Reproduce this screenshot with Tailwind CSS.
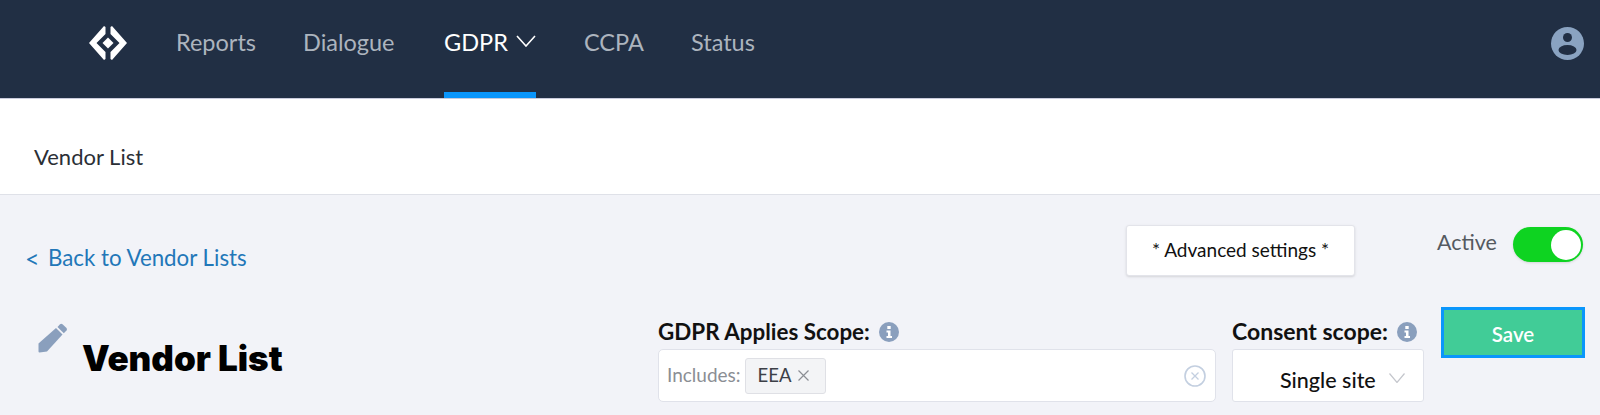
<!DOCTYPE html>
<html lang="en">
<head>
<meta charset="utf-8">
<title>Vendor List</title>
<script src="https://cdn.jsdelivr.net/npm/@tailwindcss/browser@4"></script>
</head>
<body class="w-[1600px] h-[415px] overflow-hidden bg-[#f2f3f8] font-['Lato',sans-serif]">
<nav class="h-[99px] bg-[#212f44] border-b border-[#c9cbdc] flex items-start pl-[88px] pr-[16px]">
  <svg class="w-[40px] h-[36px] mt-[25px]" viewBox="0 0 40 36" fill="#fff">
    <path d="M16 1 L17.5 2 V9 L8.5 18 L17.5 27 V34 L16 35 L1 18 Z"/>
    <path d="M24 1 L22.5 2 V9 L31.5 18 L22.5 27 V34 L24 35 L39 18 Z"/>
    <path d="M20 12.5 L25.5 18 L20 23.5 L14.500 18 Z"/>
  </svg>
  <div class="ml-[48px] flex text-[23.500px] leading-[30px] text-[#acb4be]">
    <a class="pt-[27px] w-[127px]">Reports</a>
    <a class="pt-[27px] w-[141px]">Dialogue</a>
    <a class="h-[98px] pt-[27px] w-[92px] border-b-[6px] border-[#0a96fb] text-white flex items-start gap-[8px]">GDPR
      <svg class="w-[20px] h-[12px] mt-[8px] shrink-0" viewBox="0 0 20 12" fill="none" stroke="#fff" stroke-width="1.600"><path d="M1 1 L10 11 L19 1"/></svg>
    </a>
    <a class="pt-[27px] ml-[48px] w-[107px]">CCPA</a>
    <a class="pt-[27px]">Status</a>
  </div>
  <svg class="w-[33px] h-[33px] ml-auto mt-[27px]" viewBox="0 0 33 33">
    <circle cx="16.500" cy="16.500" r="16.500" fill="#8aa3c1"/>
    <circle cx="16.500" cy="10.500" r="4.500" fill="#212f44"/>
    <ellipse cx="16.500" cy="23" rx="9" ry="5" fill="#212f44"/>
  </svg>
</nav>
<header class="h-[96px] bg-white border-b border-[#dfe1e8] pl-[34px] pt-[44px] text-[22px] leading-[28px] text-[#2b2f36]">Vendor List</header>
<main class="relative">
  <div class="h-[111px] flex items-start pl-[25px] pr-[17px]">
    <a class="mt-[48px] text-[#2277b8] text-[22.300px] leading-[30px] flex items-center"><span class="w-[23px] text-[25px]">&lt;</span>Back to Vendor Lists</a>
    <button class="ml-auto mt-[30px] w-[229px] h-[51px] bg-white rounded-[3px] border border-[#e3e4ea] shadow-sm text-[19px] text-[#111]">* Advanced settings *</button>
    <span class="ml-[82px] mt-[32px] text-[21.500px] leading-[30px] text-[#555a60] w-[76px]">Active</span>
    <span class="mt-[32px] w-[70px] h-[35px] rounded-full bg-[#0ed321] flex items-center justify-end pr-[2px] shadow-sm">
      <span class="w-[30px] h-[30px] rounded-full bg-white"></span>
    </span>
  </div>
  <div class="flex items-start">
    <svg class="ml-[38px] mt-[17px] w-[30px] h-[30px]" viewBox="0 0 30 30" fill="#8a9fbd">
      <path d="M0.500 20.500 L18 5 L24.500 11.500 L9 28.500 L1.500 29.500 Q0.500 29.500 0.500 28.500 Z"/>
      <path d="M19.500 4 L22 1.300 Q23.200 0.200 24.500 1.300 L28.500 5 Q29.500 6.300 28.500 7.500 L25.800 10.300 Z"/>
    </svg>
    <h1 class="ml-[14px] mt-[30px] w-[201px] whitespace-nowrap text-[35px] leading-[44px] font-black text-black font-['Inter',sans-serif]">Vendor List</h1>
    <div class="ml-[375px] w-[558px] mt-[13px]">
      <div class="h-[25px] flex items-center gap-[9px] text-[22.400px] font-bold text-[#111]">GDPR Applies Scope:
        <svg class="w-[20px] h-[20px]" viewBox="0 0 20 20"><circle cx="10" cy="10" r="10" fill="#8a9fbd"/><rect x="8.300" y="4" width="3.400" height="3" fill="#fff"/><path d="M7.500 8.500 H11.500 V14 H13 V16 H7.500 V14 H9 V10.500 H7.500 Z" fill="#fff"/></svg>
      </div>
      <div class="h-[53px] mt-[5px] bg-white border border-[#e0e2ea] rounded-[5px] flex items-center pl-[8px] pr-[9px]">
        <span class="text-[19px] text-[#8b8e94]">Includes:</span>
        <span class="ml-[4px] w-[81px] h-[36px] bg-[#f3f4f6] border border-[#dfe0e5] rounded-[3px] flex items-center pl-[12px] gap-[7px] text-[18.500px] text-[#3c4047]">EEA
          <svg class="w-[11px] h-[11px]" viewBox="0 0 11 11" fill="none" stroke="#8b8e94" stroke-width="1.200"><path d="M0.500 0.500 L10.500 10.500 M10.500 0.500 L0.500 10.500"/></svg>
        </span>
        <svg class="ml-auto w-[22px] h-[22px]" viewBox="0 0 22 22" fill="none" stroke="#c3cfe0" stroke-width="1.600"><circle cx="11" cy="11" r="10"/><path d="M7.500 7.500 L14.500 14.500 M14.500 7.500 L7.500 14.500" stroke-width="1.300"/></svg>
      </div>
    </div>
    <div class="ml-[16px] w-[192px] mt-[13px]">
      <div class="h-[25px] flex items-center gap-[9px] text-[23px] font-bold text-[#111] whitespace-nowrap">Consent scope:
        <svg class="w-[20px] h-[20px] shrink-0" viewBox="0 0 20 20"><circle cx="10" cy="10" r="10" fill="#8a9fbd"/><rect x="8.300" y="4" width="3.400" height="3" fill="#fff"/><path d="M7.500 8.500 H11.500 V14 H13 V16 H7.500 V14 H9 V10.500 H7.500 Z" fill="#fff"/></svg>
      </div>
      <div class="h-[53px] mt-[5px] pt-[9px] bg-white border border-[#e0e2ea] rounded-[3px] flex items-center pl-[47px] gap-[13px] text-[21.500px] font-medium text-[#111]">Single site
        <svg class="w-[16px] h-[10px] mb-[4px]" viewBox="0 0 16 10" fill="none" stroke="#c4c6cc" stroke-width="1.200"><path d="M0.500 0.500 L8 9.500 L15.500 0.500"/></svg>
      </div>
    </div>
    <button class="ml-[17px] w-[144px] h-[51px] mt-[1px] pt-[3px] bg-[#41cc97] border-[3px] border-[#0a96fb] text-white text-[20.500px] font-semibold">Save</button>
  </div>
</main>
</body>
</html>
